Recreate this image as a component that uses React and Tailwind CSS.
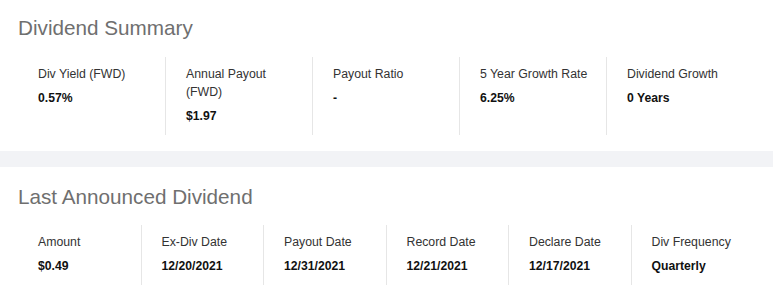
import React from "react";

const summary = [
  { label: "Div Yield (FWD)", value: "0.57%" },
  { label: "Annual Payout (FWD)", value: "$1.97" },
  { label: "Payout Ratio", value: "-" },
  { label: "5 Year Growth Rate", value: "6.25%" },
  { label: "Dividend Growth", value: "0 Years" },
];

const last = [
  { label: "Amount", value: "$0.49" },
  { label: "Ex-Div Date", value: "12/20/2021" },
  { label: "Payout Date", value: "12/31/2021" },
  { label: "Record Date", value: "12/21/2021" },
  { label: "Declare Date", value: "12/17/2021" },
  { label: "Div Frequency", value: "Quarterly" },
];

function Stat({ item, first }) {
  return (
    <div
      className={
        "pl-5 pr-3 pt-2 pb-[10px] " + (first ? "" : "border-l border-[#e6e6e6]")
      }
    >
      <div className="text-[12.3px] leading-[18px] text-[#333333]">{item.label}</div>
      <div className="mt-[6px] text-[12.2px] leading-[18px] font-bold text-[#111111]">
        {item.value}
      </div>
    </div>
  );
}

export default function App() {
  return (
    <div
      className="w-[773px] h-[298px] bg-white overflow-hidden"
      style={{ fontFamily: '"Liberation Sans", Arial, sans-serif' }}
    >
      <section className="pt-[14px] pb-[16px]">
        <h2 className="pl-[18px] text-[20.7px] leading-[28px] text-[#6f6f6f] font-normal">
          Dividend Summary
        </h2>
        <div className="mt-[15px] pl-[18px] pr-[20px] grid grid-cols-5">
          {summary.map((s, i) => (
            <Stat key={s.label} item={s} first={i === 0} />
          ))}
        </div>
      </section>
      <div className="h-[16px] bg-[#f2f3f6]" />
      <section className="pt-[16px]">
        <h2 className="pl-[18px] text-[20.7px] leading-[28px] text-[#6f6f6f] font-normal">
          Last Announced Dividend
        </h2>
        <div className="mt-[14px] pl-[18px] pr-[20px] grid grid-cols-6">
          {last.map((s, i) => (
            <Stat key={s.label} item={s} first={i === 0} />
          ))}
        </div>
      </section>
    </div>
  );
}
